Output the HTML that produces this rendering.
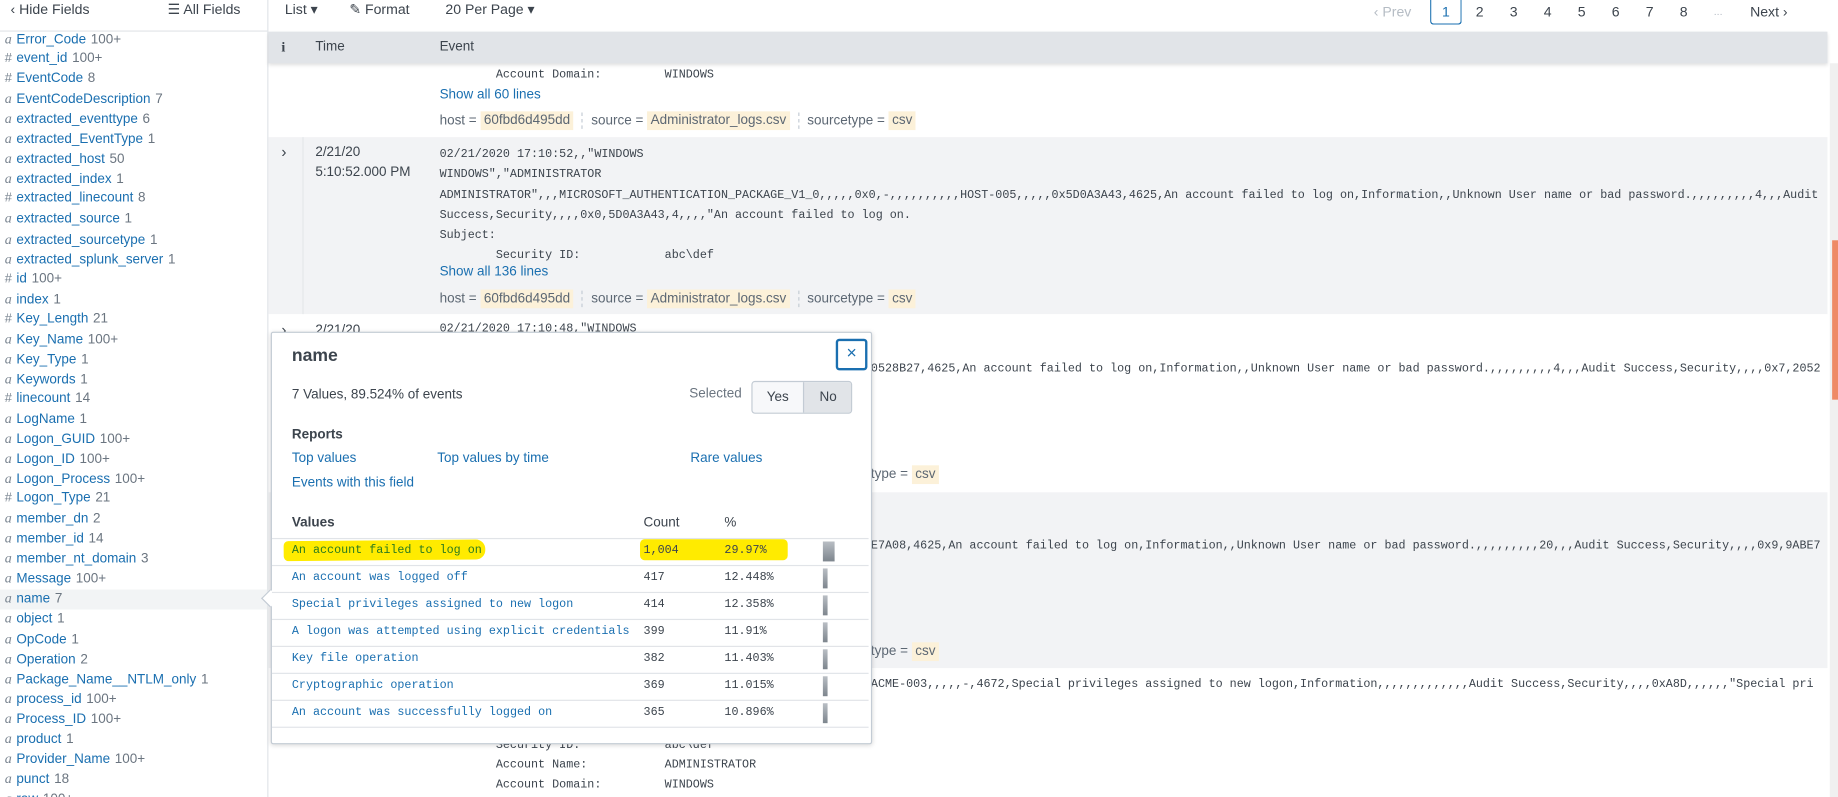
<!DOCTYPE html>
<html><head><meta charset="utf-8">
<style>
html,body{margin:0;padding:0;width:1838px;height:797px;overflow:hidden;background:#fff}
#w{position:absolute;left:0;top:0;width:1568px;height:680px;transform:scale(1.17219,1.17206);transform-origin:0 0;font-family:"Liberation Sans",sans-serif;font-size:11.5px;color:#3c444d}
.a{position:absolute;white-space:nowrap}
.m{font-family:"Liberation Mono",monospace;font-size:10px;white-space:pre}
.bl{color:#1a6fb0}
.g{color:#5c6773}
.tag{background:#fcf1d9;padding:2px 3px}
.sep{display:inline-block;width:0;height:14px;border-left:1px dashed #c3cbd4;vertical-align:middle;margin:0 7px}
.f{position:absolute;left:0;width:228px;height:17px;line-height:17px;white-space:nowrap;font-size:11.5px}
.f i{display:inline-block;width:10px;margin-left:4px;color:#7a8591;font-family:"Liberation Serif",serif;font-size:12px}
.f b{font-weight:normal;color:#1a6fb0}
.f s{text-decoration:none;color:#6b7580;margin-left:4px}
.pg{position:absolute;top:0;height:21px;line-height:21px;font-size:12px;color:#3c444d}
</style></head><body><div id="w">
<div class="a" style="left:0;top:0;width:228px;height:680px;border-right:1px solid #e1e4e8"></div>
<div class="a" style="left:0;top:26px;width:228px;border-top:1px solid #e1e4e8"></div>
<div class="a" style="left:9px;top:1px;font-size:12px;color:#3c444d">‹ Hide Fields</div>
<div class="a" style="left:143px;top:1px;font-size:12px;color:#3c444d">☰ All Fields</div>
<div class="a" style="left:0;top:503px;width:228px;height:17px;background:#f2f4f5"></div>
<div id="fl" class="a" style="left:0;top:25px;width:228px;height:655px;overflow:hidden"></div>

<div class="a" style="left:243px;top:1px;font-size:12px">List ▾</div>
<div class="a" style="left:298px;top:1px;font-size:12px">✎ Format</div>
<div class="a" style="left:380px;top:1px;font-size:12px">20 Per Page ▾</div>
<div class="pg" style="left:1172px;color:#b5bcc4">‹ Prev</div>
<div class="pg" style="left:1220px;width:25px;height:20px;border:1px solid #1a6fb0;border-top:none;border-radius:0 0 3px 3px;text-align:center;color:#1a6fb0">1</div>
<div class="pg" style="left:1259px">2</div><div class="pg" style="left:1288px">3</div><div class="pg" style="left:1317px">4</div><div class="pg" style="left:1346px">5</div><div class="pg" style="left:1375px">6</div><div class="pg" style="left:1404px">7</div><div class="pg" style="left:1433px">8</div>
<div class="pg" style="left:1462px;color:#b5bcc4;font-size:9px">...</div>
<div class="pg" style="left:1493px">Next ›</div>

<div class="a" style="left:229px;top:27px;width:1330px;height:27px;background:#e1e4e8;box-shadow:0 2px 3px rgba(0,0,0,.12)"></div>
<div class="a" style="left:240px;top:33px;font-weight:bold;font-family:'Liberation Serif',serif;font-size:12px">i</div>
<div class="a" style="left:269px;top:34px">Time</div>
<div class="a" style="left:375px;top:34px">Event</div>

<div class="a" style="left:229px;top:117px;width:1330px;height:151px;background:#f2f3f5"></div>
<div class="a" style="left:229px;top:420px;width:1330px;height:150px;background:#f2f3f5"></div>
<div class="a" style="left:258px;top:117px;height:151px;border-left:1px solid #e4e7ea"></div>
<div class="a" style="left:258px;top:420px;height:150px;border-left:1px solid #e4e7ea"></div>
<div class="a" style="left:1561px;top:54px;width:7px;height:626px;background:#f0f0f0"></div>
<div class="a" style="left:1563px;top:205px;width:5px;height:136px;background:#ee8a66"></div>

<div class="a m" style="left:375px;top:59px">        Account Domain:         WINDOWS</div>
<div class="a bl" style="left:375px;top:75px">Show all 60 lines</div>
<div class="a g" style="left:375px;top:96px">host = <span class="tag">60fbd6d495dd</span><span class="sep"></span>source = <span class="tag">Administrator_logs.csv</span><span class="sep"></span>sourcetype = <span class="tag">csv</span></div>

<div class="a" style="left:240px;top:122px;font-size:13px">›</div>
<div class="a" style="left:269px;top:124px">2/21/20</div>
<div class="a" style="left:269px;top:141px">5:10:52.000 PM</div>
<div class="a m" style="left:375px;top:124px;line-height:17.3px">02/21/2020 17:10:52,,"WINDOWS
WINDOWS","ADMINISTRATOR
ADMINISTRATOR",,,MICROSOFT_AUTHENTICATION_PACKAGE_V1_0,,,,,0x0,-,,,,,,,,,,HOST-005,,,,,0x5D0A3A43,4625,An account failed to log on,Information,,Unknown User name or bad password.,,,,,,,,,4,,,Audit
Success,Security,,,,0x0,5D0A3A43,4,,,,"An account failed to log on.
Subject:
        Security ID:            abc\def</div>
<div class="a bl" style="left:375px;top:226px">Show all 136 lines</div>
<div class="a g" style="left:375px;top:248px">host = <span class="tag">60fbd6d495dd</span><span class="sep"></span>source = <span class="tag">Administrator_logs.csv</span><span class="sep"></span>sourcetype = <span class="tag">csv</span></div>

<div class="a" style="left:240px;top:274px;font-size:13px">›</div>
<div class="a" style="left:269px;top:276px">2/21/20</div>
<div class="a m" style="left:375px;top:276px">02/21/2020 17:10:48,"WINDOWS</div>
<div class="a m" style="left:743px;top:310px">0528B27,4625,An account failed to log on,Information,,Unknown User name or bad password.,,,,,,,,,4,,,Audit Success,Security,,,,0x7,2052</div>
<div class="a g" style="left:743px;top:399px">type = <span class="tag">csv</span></div>

<div class="a m" style="left:743px;top:461px">E7A08,4625,An account failed to log on,Information,,Unknown User name or bad password.,,,,,,,,,20,,,Audit Success,Security,,,,0x9,9ABE7</div>
<div class="a g" style="left:743px;top:550px">type = <span class="tag">csv</span></div>

<div class="a m" style="left:743px;top:579px">ACME-003,,,,,-,4672,Special privileges assigned to new logon,Information,,,,,,,,,,,,,Audit Success,Security,,,,0xA8D,,,,,,"Special pri</div>
<div class="a m" style="left:375px;top:628px;line-height:17px">        Security ID:            abc\def
        Account Name:           ADMINISTRATOR
        Account Domain:         WINDOWS</div>

<div class="a" style="left:231px;top:283px;width:511px;height:350px;background:#fff;border:1px solid #c3cbd4;border-radius:2px;box-shadow:0 1px 4px rgba(0,0,0,.15)"></div>
<div class="a" style="left:225px;top:505px;width:10px;height:10px;background:#fff;border-left:1px solid #c3cbd4;border-bottom:1px solid #c3cbd4;transform:rotate(45deg)"></div>
<div class="a" style="left:249px;top:295px;font-size:15px;font-weight:bold;color:#3c444d">name</div>
<div class="a" style="left:713px;top:289px;width:23px;height:23px;border:2px solid #1a6fb0;border-radius:3px;text-align:center;line-height:22px;color:#1a6fb0;font-size:15px">×</div>
<div class="a" style="left:249px;top:331px">7 Values, 89.524% of events</div>
<div class="a" style="left:588px;top:330px;color:#6b7580">Selected</div>
<div class="a" style="left:641px;top:325px;width:84px;height:26px;border:1px solid #c3cbd4;border-radius:3px;background:#f7f8fa;overflow:hidden">
 <div class="a" style="left:0;top:0;width:43px;height:26px;line-height:26px;text-align:center">Yes</div>
 <div class="a" style="left:43px;top:0;width:41px;height:26px;line-height:26px;text-align:center;background:#e1e4e8;border-left:1px solid #c3cbd4">No</div>
</div>
<div class="a" style="left:249px;top:365px;font-weight:bold">Reports</div>
<div class="a bl" style="left:249px;top:385px">Top values</div>
<div class="a bl" style="left:373px;top:385px">Top values by time</div>
<div class="a bl" style="left:589px;top:385px">Rare values</div>
<div class="a bl" style="left:249px;top:406px">Events with this field</div>
<div class="a" style="left:249px;top:440px;font-weight:bold">Values</div>
<div class="a" style="left:549px;top:440px">Count</div>
<div class="a" style="left:618px;top:440px">%</div>
<div class="a" style="left:242px;top:461px;width:172px;height:17px;background:#ffeb00;border-radius:4px 8px 8px 4px;transform:rotate(-0.5deg)"></div>
<div class="a" style="left:546px;top:460px;width:126px;height:18px;background:#ffeb00;border-radius:4px"></div>
<div id="vt" class="a" style="left:232px;top:459px;width:510px"></div>
</div>
<script>
var F=[["a","Error_Code","100+"],["#","event_id","100+"],["#","EventCode","8"],["a","EventCodeDescription","7"],["a","extracted_eventtype","6"],["a","extracted_EventType","1"],["a","extracted_host","50"],["a","extracted_index","1"],["#","extracted_linecount","8"],["a","extracted_source","1"],["a","extracted_sourcetype","1"],["a","extracted_splunk_server","1"],["#","id","100+"],["a","index","1"],["#","Key_Length","21"],["a","Key_Name","100+"],["a","Key_Type","1"],["a","Keywords","1"],["#","linecount","14"],["a","LogName","1"],["a","Logon_GUID","100+"],["a","Logon_ID","100+"],["a","Logon_Process","100+"],["#","Logon_Type","21"],["a","member_dn","2"],["a","member_id","14"],["a","member_nt_domain","3"],["a","Message","100+"],["a","name","7"],["a","object","1"],["a","OpCode","1"],["a","Operation","2"],["a","Package_Name__NTLM_only","1"],["a","process_id","100+"],["a","Process_ID","100+"],["a","product","1"],["a","Provider_Name","100+"],["a","punct","18"],["a","raw","100+"]];
var h="";F.forEach(function(f,i){h+='<div class="f" style="top:'+(i*17.05)+'px"><i style="'+(f[0]=="#"?"font-style:normal;font-family:Liberation Sans,sans-serif;font-size:11px":"")+'">'+f[0]+'</i><b>'+f[1]+'</b><s>'+f[2]+'</s></div>';});
document.getElementById("fl").innerHTML=h;
var V=[["An account failed to log on","1,004","29.97%",10],["An account was logged off","417","12.448%",4],["Special privileges assigned to new logon","414","12.358%",4],["A logon was attempted using explicit credentials","399","11.91%",4],["Key file operation","382","11.403%",4],["Cryptographic operation","369","11.015%",4],["An account was successfully logged on","365","10.896%",4]];
var t="";V.forEach(function(v,i){var y=i*23;var c=i==0?"#2a7a1f":"#1a6fb0";
t+='<div class="a" style="left:0;top:'+y+'px;width:509px;border-top:1px solid #e1e4e8"></div>';
t+='<div class="a m" style="left:17px;top:'+(y+6)+'px;color:'+c+'">'+v[0]+'</div>';
t+='<div class="a m" style="left:317px;top:'+(y+6)+'px;color:#3c444d">'+v[1]+'</div>';
t+='<div class="a m" style="left:386px;top:'+(y+6)+'px;color:#3c444d">'+v[2]+'</div>';
t+='<div class="a" style="left:470px;top:'+(y+3)+'px;width:'+v[3]+'px;height:17px;background:linear-gradient(#b9bec4,#7d858d)"></div>';});
t+='<div class="a" style="left:0;top:161px;width:509px;border-top:1px solid #e1e4e8"></div>';
document.getElementById("vt").innerHTML=t;
</script>
</body></html>
